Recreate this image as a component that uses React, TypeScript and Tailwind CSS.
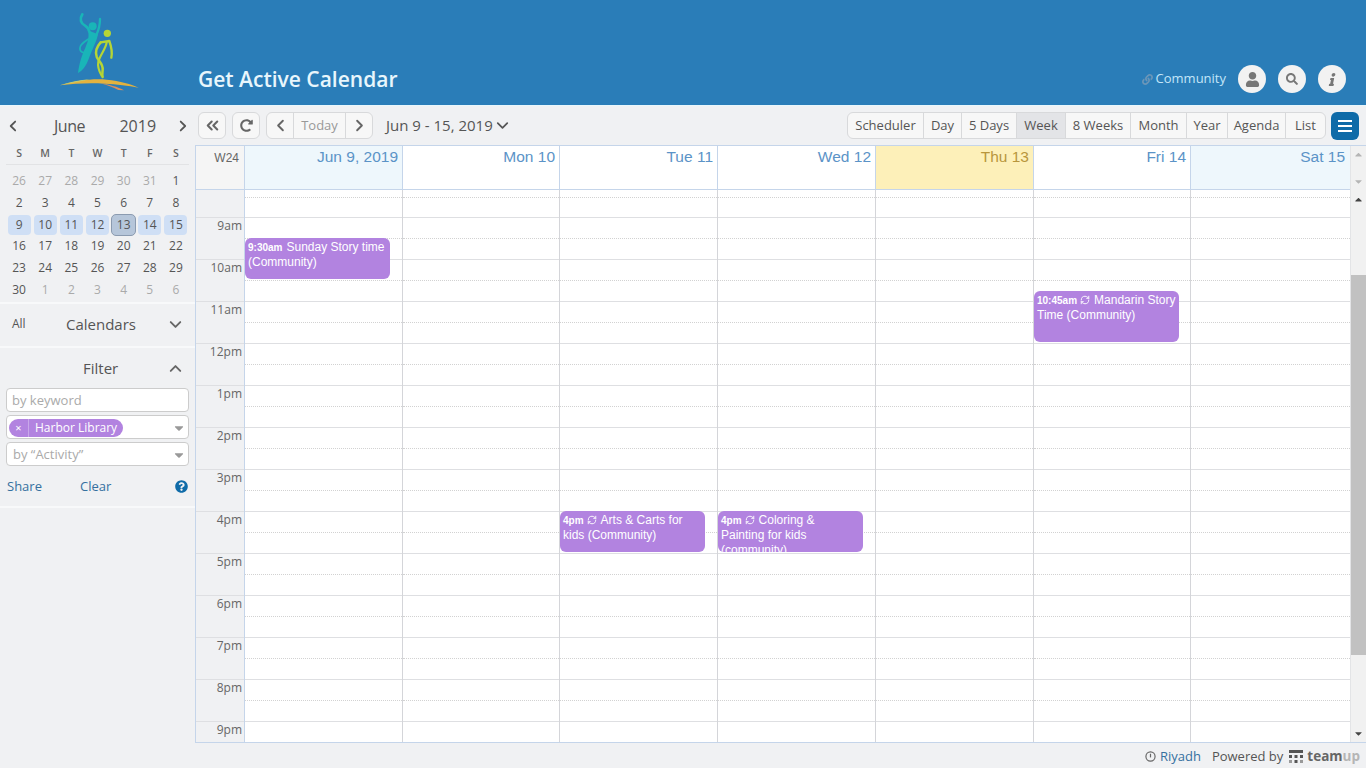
import React from "react";
import { ChevronLeft, ChevronRight, ChevronDown, ChevronUp, ChevronsLeft } from "lucide-react";
import { FaLink, FaUser, FaSearch, FaInfo, FaRedoAlt, FaQuestionCircle, FaCaretDown, FaCaretUp } from "react-icons/fa";
import { LuRefreshCw } from "react-icons/lu";

const weeks = [
  ["26", "27", "28", "29", "30", "31", "1"],
  ["2", "3", "4", "5", "6", "7", "8"],
  ["9", "10", "11", "12", "13", "14", "15"],
  ["16", "17", "18", "19", "20", "21", "22"],
  ["23", "24", "25", "26", "27", "28", "29"],
  ["30", "1", "2", "3", "4", "5", "6"],
];

const views = [
  { name: "Scheduler", w: "w-[76px]" },
  { name: "Day", w: "w-[38px]" },
  { name: "5 Days", w: "w-[55px]" },
  { name: "Week", w: "w-[49px]" },
  { name: "8 Weeks", w: "w-[65px]" },
  { name: "Month", w: "w-[56px]" },
  { name: "Year", w: "w-[41px]" },
  { name: "Agenda", w: "w-[58px]" },
  { name: "List", w: "w-[39px]" },
];

const days = [
  { label: "Jun 9, 2019", head: "bg-[#eef7fc] text-[#5b93c7]", w: "w-[158px]", border: "border-r-[#c5d5ea]" },
  { label: "Mon 10", head: "bg-white text-[#5b93c7]", w: "w-[157px]", border: "border-r-[#c5d5ea]" },
  { label: "Tue 11", head: "bg-white text-[#5b93c7]", w: "w-[158px]", border: "border-r-[#c5d5ea]" },
  { label: "Wed 12", head: "bg-white text-[#5b93c7]", w: "w-[158px]", border: "border-r-[#c5d5ea]" },
  { label: "Thu 13", head: "bg-[#fdf0b9] text-[#b8963c]", w: "w-[158px]", border: "border-r-[#c5d5ea]" },
  { label: "Fri 14", head: "bg-white text-[#5b93c7]", w: "w-[157px]", border: "border-r-[#c5d5ea]" },
  { label: "Sat 15", head: "bg-[#eef7fc] text-[#5b93c7]", w: "flex-1", border: "border-r-transparent" },
];

const hours = ["9am", "10am", "11am", "12pm", "1pm", "2pm", "3pm", "4pm", "5pm", "6pm", "7pm", "8pm", "9pm"];

const events = [
  { day: 0, top: "top-[48px]", h: "h-[41px]", time: "9:30am", repeat: false, title: "Sunday Story time (Community)" },
  { day: 5, top: "top-[101px]", h: "h-[51px]", time: "10:45am", repeat: true, title: "Mandarin Story Time (Community)" },
  { day: 2, top: "top-[321px]", h: "h-[41px]", time: "4pm", repeat: true, title: "Arts & Carts for kids (Community)" },
  { day: 3, top: "top-[321px]", h: "h-[41px]", time: "4pm", repeat: true, title: "Coloring & Painting for kids (community)" },
];

const RepeatIcon = () => (
  <LuRefreshCw className="inline-block w-[10px] h-[10px] ml-[3px] mr-[4px] align-[-1px]" strokeWidth={2.2} />
);

const Logo = () => (
  <svg width="100" height="95" viewBox="0 0 300 285" className="block">
    {/* blue figure */}
    <g fill="none" stroke="#19b5b8" strokeLinecap="round">
      <path d="M97 28 C88 42 92 55 105 62 C112 66 116 72 118 80" strokeWidth="8" />
      <path d="M150 42 C150 58 146 76 138 92" strokeWidth="7" />
      <path d="M118 100 C108 108 92 115 90 128 C88 140 100 146 110 140" strokeWidth="5" />
    </g>
    <circle cx="128" cy="64" r="12" fill="#19b5b8" />
    <path d="M114 76 L144 88 C140 110 126 134 116 162 C108 184 97 198 84 204 C88 172 96 150 106 128 C114 110 118 95 114 76 Z" fill="#19b5b8" />
    {/* green figure */}
    <circle cx="172" cy="85" r="11" fill="#b6d535" />
    <g fill="none" stroke="#b6d535" strokeLinecap="round" strokeLinejoin="round">
      <path d="M152 112 L178 108 C184 125 188 140 184 158" strokeWidth="7" />
      <path d="M152 112 C140 125 135 140 140 155 C146 170 160 175 158 195 C157 205 156 210 158 216" strokeWidth="7.5" />
      <path d="M170 112 C168 130 150 150 145 170 C142 185 148 200 155 212" strokeWidth="6.5" />
    </g>
    {/* hill */}
    <path d="M30 241 C80 226 130 220 170 224 C210 228 245 238 266 248 C235 241 200 238 165 236 C120 233 75 235 30 241 Z" fill="#e3b23e" />
    <path d="M30 241 C60 231 90 225 120 223 C95 229 60 235 30 241 Z" fill="#c7cf6d" />
    <path d="M150 235 C175 238 205 246 222 256 L205 255 C190 247 170 240 150 235 Z" fill="#d98e5c" />
  </svg>
);

const TeamupMark = () => (
  <svg width="14" height="14" viewBox="0 0 14 14" className="block">
    <rect x="0" y="0" width="14" height="3" fill="#555" />
    <rect x="0" y="5" width="3" height="3" fill="#555" />
    <rect x="5.5" y="5" width="3" height="3" fill="#555" />
    <rect x="11" y="5" width="3" height="3" fill="#555" />
    <rect x="0" y="10" width="3" height="3" fill="#999" />
    <rect x="5.5" y="10" width="3" height="3" fill="#555" />
    <rect x="11" y="10" width="3" height="3" fill="#999" />
  </svg>
);

const Sidebar = () => (
  <aside className="w-[195px] shrink-0 text-[#555]">
    {/* Mini calendar */}
    <div className="h-[198px] pt-[8px] border-b-2 border-[#f8f9fa]">
      <div className="flex items-center h-[24px] pl-[4px] pr-[3px] text-[16px] text-[#555]">
        <ChevronLeft className="w-[18px] h-[18px] text-[#555]" strokeWidth={2.4} />
        <span className="ml-[32px] w-[66px] tracking-tight">June</span>
        <span className="w-[55px]">2019</span>
        <ChevronRight className="w-[18px] h-[18px] text-[#555]" strokeWidth={2.4} />
      </div>
      <div className="mx-[6px] mt-[5px] grid grid-cols-7 h-[22px] items-center text-center text-[10.5px] font-semibold text-[#666] border-b border-[#e2e3e5] w-[183px]">
        {["S", "M", "T", "W", "T", "F", "S"].map((d, i) => (
          <span key={i}>{d}</span>
        ))}
      </div>
      <div className="mx-[6px] mt-[5px] w-[183px]">
        {weeks.map((week, r) => (
          <div key={r} className="grid grid-cols-7 h-[21.8px] items-center text-center text-[12px]">
            {week.map((d, c) => {
              const muted = (r === 0 && c < 6) || (r === 5 && c > 0);
              const inWeek = r === 2;
              const today = inWeek && c === 4;
              return (
                <span
                  key={c}
                  className={`${
                    today
                      ? "mx-[0.5px] h-[22px] leading-[20px] rounded-[5px] bg-[#b6c6da] border border-[#8b9bb0]"
                      : inWeek
                      ? "mx-[1.5px] h-[20px] leading-[20px] rounded-[4px] bg-[#cfdff5]"
                      : "mx-[1.5px] h-[20px] leading-[20px]"
                  } ${muted ? "text-[#aaa]" : "text-[#555]"}`}
                >
                  {d}
                </span>
              );
            })}
          </div>
        ))}
      </div>
    </div>

    {/* Calendars */}
    <div className="h-[44px] flex items-center pl-[12px] pr-[10px] pb-[2px] border-b-2 border-[#f8f9fa]">
      <span className="text-[12px] w-[54px]">All</span>
      <span className="text-[15px] flex-1 text-[#555]">Calendars</span>
      <ChevronDown className="w-[19px] h-[19px] text-[#666]" strokeWidth={2.4} />
    </div>

    {/* Filter */}
    <div className="h-[160px] border-b-2 border-[#f8f9fa]">
      <div className="h-[40px] flex items-center pl-[83px] pr-[10px]">
        <span className="text-[15px] flex-1">Filter</span>
        <ChevronUp className="w-[19px] h-[19px] text-[#666]" strokeWidth={2.4} />
      </div>
      <div className="mx-[6px] w-[183px] flex flex-col gap-[3px]">
        <div className="h-[24px] bg-white border border-[#ccc] rounded-[4px] pl-[5px] text-[13px] leading-[22px] text-[#aaa]">by keyword</div>
        <div className="h-[24px] bg-white border border-[#ccc] rounded-[4px] flex items-center pl-[2px] pr-[2px] pt-[2px]">
          <span className="h-[18px] rounded-[9px] bg-[#b283e0] text-white text-[12px] leading-[18px] flex w-[114px]">
            <span className="w-[20px] text-center border-r border-[#c9a8ea] text-[11px]">×</span>
            <span className="pl-[6px]">Harbor Library</span>
          </span>
          <FaCaretDown className="ml-auto w-[14px] h-[14px] text-[#999]" />
        </div>
        <div className="h-[24px] bg-white border border-[#ccc] rounded-[4px] flex items-center pl-[6px] pr-[2px] pt-[2px] text-[13px] text-[#aaa]">
          by “Activity”
          <FaCaretDown className="ml-auto w-[14px] h-[14px] text-[#999]" />
        </div>
      </div>
      <div className="mt-[11px] flex items-center pl-[7px] pr-[7px] text-[13px] text-[#35709f]">
        <span className="w-[73px]">Share</span>
        <span>Clear</span>
        <FaQuestionCircle className="ml-auto w-[13px] h-[13px] text-[#0f6ba8]" />
      </div>
    </div>
  </aside>
);

const Toolbar = () => (
  <div className="h-[39px] shrink-0 flex items-center pl-[3px] pr-[7px] text-[#666]">
    <button className="w-[28px] h-[27px] flex items-center justify-center border border-[#d8d9db] rounded-[6px] bg-[#f7f7f7]">
      <ChevronsLeft className="w-[19px] h-[19px]" strokeWidth={2.6} />
    </button>
    <button className="ml-[6px] w-[28px] h-[27px] flex items-center justify-center border border-[#d8d9db] rounded-[6px] bg-[#f7f7f7]">
      <FaRedoAlt className="w-[13px] h-[13px]" />
    </button>
    <div className="ml-[6px] h-[27px] flex border border-[#d8d9db] rounded-[6px] bg-[#f7f7f7] w-[107px]">
      <span className="w-[27px] flex items-center justify-center border-r border-[#d8d9db]">
        <ChevronLeft className="w-[19px] h-[19px]" strokeWidth={2.4} />
      </span>
      <span className="w-[52px] text-center text-[13px] leading-[25px] text-[#999] border-r border-[#d8d9db]">Today</span>
      <span className="flex-1 flex items-center justify-center">
        <ChevronRight className="w-[19px] h-[19px]" strokeWidth={2.4} />
      </span>
    </div>
    <span className="ml-[13px] text-[15px] text-[#555]">Jun 9 - 15, 2019</span>
    <ChevronDown className="w-[19px] h-[19px] text-[#555]" strokeWidth={2.2} />
    <div className="ml-auto h-[27px] flex border border-[#d8d9db] rounded-[6px] bg-[#f7f7f7] text-[13px] text-[#555] overflow-hidden">
      {views.map((v, i) => (
        <span
          key={v.name}
          className={`${v.w} text-center leading-[25px] ${i < views.length - 1 ? "border-r border-[#d8d9db]" : ""} ${
            v.name === "Week" ? "bg-[#e3e4e7]" : ""
          }`}
        >
          {v.name}
        </span>
      ))}
    </div>
    <button className="ml-[5px] w-[28px] h-[28px] rounded-[6px] bg-[#0f6ba8] flex flex-col items-center justify-center gap-[3px]">
      <span className="w-[14px] h-[2px] bg-white" />
      <span className="w-[14px] h-[2px] bg-white" />
      <span className="w-[14px] h-[2px] bg-white" />
    </button>
  </div>
);

const Slots = () => (
  <>
    <div className="h-[8px] border-b border-dotted border-[#d2d2d2]" />
    <div className="h-[20px] border-b border-[#dedfe2]" />
    {hours.map((h) => (
      <React.Fragment key={h}>
        <div className="h-[21px] border-b border-dotted border-[#d2d2d2]" />
        <div className="h-[21px] border-b border-[#dedfe2]" />
      </React.Fragment>
    ))}
  </>
);

const CalendarGrid = () => (
  <div className="flex-1 min-h-0 flex border border-[#c5d5ea] border-r-0">
    <div className="flex-1 min-w-0 flex flex-col font-['Liberation_Sans',Arial,sans-serif]">
      {/* Day headings */}
      <div className="h-[44px] shrink-0 flex border-b border-[#c5d5ea]">
        <div className="w-[49px] shrink-0 bg-[#f5f5f5] border-r border-[#c5d5ea] text-right pr-[5px] pt-[3px] text-[12px] text-[#666]">W24</div>
        {days.map((d) => (
          <div key={d.label} className={`${d.w} ${d.head} ${d.border} border-r text-right pr-[4px] text-[15.5px] leading-[22px]`}>
            {d.label}
          </div>
        ))}
      </div>
      {/* Time grid */}
      <div className="flex-1 min-h-0 flex overflow-hidden bg-white">
        <div className="w-[49px] shrink-0 border-r border-[#c5d5ea] bg-[#f0f1f3] font-['Open_Sans',sans-serif] text-[12px] text-[#666] text-right">
          <div className="h-[28px] border-b border-[#dedfe2]" />
          {hours.map((h) => (
            <div key={h} className="h-[42px] pr-[2px] leading-[16px] border-b border-[#dedfe2]">{h}</div>
          ))}
        </div>
        {days.map((d, i) => (
          <div key={d.label} className={`${d.w} relative ${i < 6 ? "border-r border-[#d4d5d9]" : ""}`}>
            <Slots />
            {events
              .filter((e) => e.day === i)
              .map((e) => (
                <div
                  key={e.title}
                  className={`absolute left-[0px] w-[145px] ${e.top} ${e.h} rounded-[6px] bg-[#b283e0] text-white text-[12px] leading-[15px] pl-[3px] pr-[2px] pt-[2px] overflow-hidden`}
                >
                  <b className="text-[10px]">{e.time}</b>
                  {e.repeat ? <RepeatIcon /> : <span className="inline-block w-[4px]" />}
                  {e.title}
                </div>
              ))}
          </div>
        ))}
      </div>
    </div>
    {/* Scrollbar */}
    <div className="w-[16px] shrink-0 flex flex-col bg-[#f1f1f1] border-l border-[#e3e4e6]">
      <div className="h-[44px] shrink-0 flex flex-col items-center justify-between py-[3px] text-[#b5b5b5]">
        <FaCaretUp className="w-[11px] h-[11px]" />
        <FaCaretDown className="w-[11px] h-[11px]" />
      </div>
      <div className="flex-1 flex flex-col items-center">
        <FaCaretUp className="w-[11px] h-[11px] mt-[4px] text-[#444]" />
        <div className="mt-[70px] w-full h-[380px] bg-[#c1c1c1]" />
        <FaCaretDown className="mt-auto mb-[3px] w-[11px] h-[11px] text-[#444]" />
      </div>
    </div>
  </div>
);

export default function App() {
  return (
    <div className="w-[1366px] h-[768px] overflow-hidden flex flex-col bg-[#f0f1f3] font-['Open_Sans',sans-serif]">
      {/* Header */}
      <header className="h-[106px] shrink-0 bg-[#2a7db8] border-b border-[#e8f7fc] flex items-end">
        <div className="self-start ml-[50px] w-[148px] pt-[5px] shrink-0">
          <Logo />
        </div>
        <h1 className="pb-[11px] text-[21px] leading-[30px] font-semibold text-[#e8f6fc]">Get Active Calendar</h1>
        <div className="ml-auto mr-[20px] pb-[12px] flex items-center">
          <FaLink className="w-[11px] h-[11px] text-[#6b96b8] mr-[3px]" />
          <span className="text-[13px] text-[#c3e6f8] mr-[12px]">Community</span>
          <span className="w-[28px] h-[28px] rounded-full bg-[#f2f2f2] flex items-center justify-center text-[#777]">
            <FaUser className="w-[15px] h-[15px]" />
          </span>
          <span className="ml-[12px] w-[28px] h-[28px] rounded-full bg-[#f2f2f2] flex items-center justify-center text-[#777]">
            <FaSearch className="w-[12px] h-[12px]" />
          </span>
          <span className="ml-[12px] w-[28px] h-[28px] rounded-full bg-[#f2f2f2] flex items-center justify-center text-[#777]">
            <FaInfo className="w-[13px] h-[13px] -skew-x-12" />
          </span>
        </div>
      </header>

      <div className="flex-1 min-h-0 flex">
        <Sidebar />
        <main className="flex-1 min-w-0 flex flex-col">
          <Toolbar />
          <CalendarGrid />
          {/* Footer */}
          <footer className="h-[25px] shrink-0 flex items-center justify-end pt-[2px] pr-[6px] text-[13px] text-[#555]">
            <svg width="11" height="11" viewBox="0 0 12 12" className="mr-[4px]">
              <circle cx="6" cy="6" r="5" fill="none" stroke="#666" strokeWidth="1.3" />
              <path d="M6 3 V7" stroke="#666" strokeWidth="1.3" />
            </svg>
            <span className="text-[#35709f] mr-[11px]">Riyadh</span>
            <span className="mr-[6px]">Powered by</span>
            <TeamupMark />
            <span className="ml-[4px] text-[13.5px] font-bold text-[#666]">team<span className="text-[#b5b5b5]">up</span></span>
          </footer>
        </main>
      </div>
    </div>
  );
}
